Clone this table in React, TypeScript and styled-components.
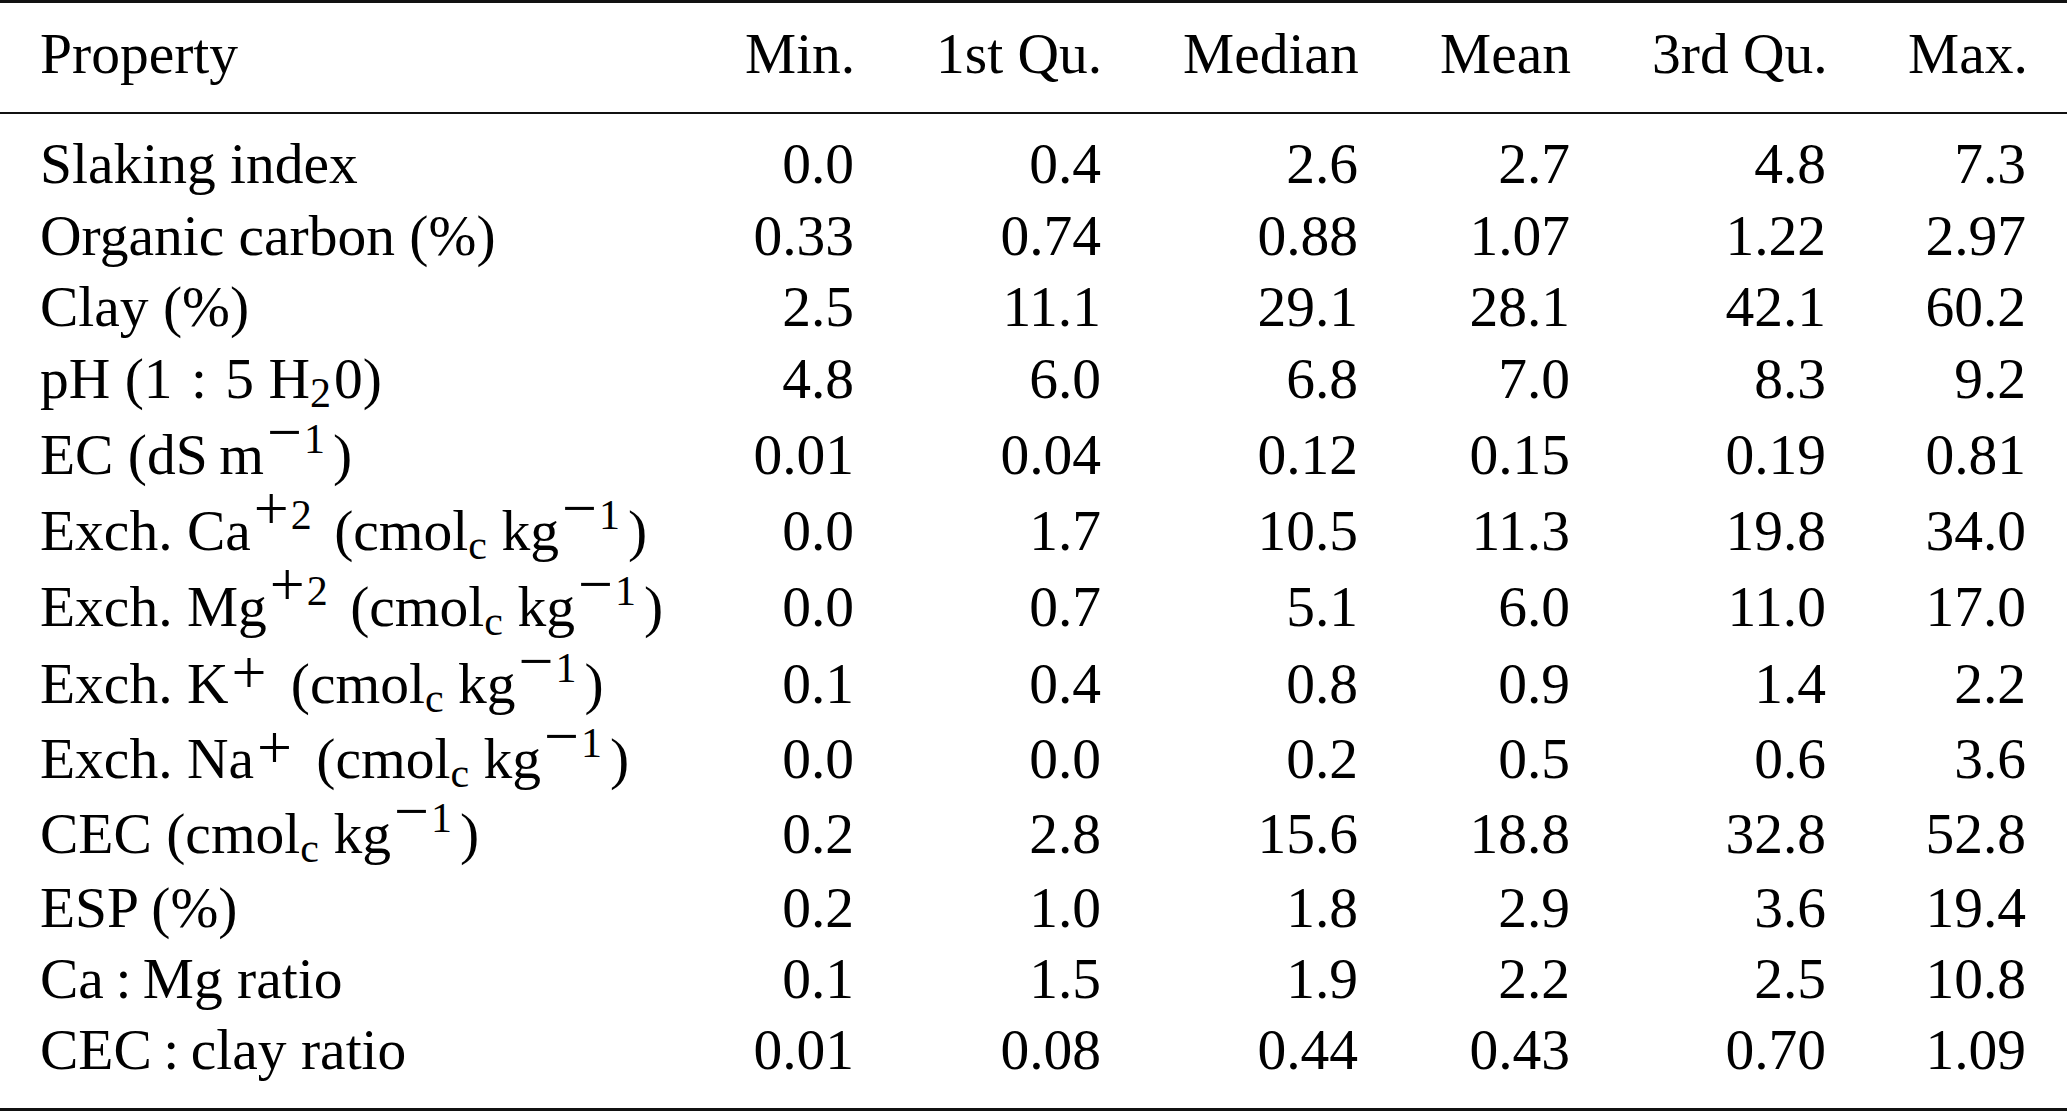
import React from 'react';
import styled, { createGlobalStyle } from 'styled-components';

const GlobalStyle = createGlobalStyle`
  html, body {
    margin: 0;
    padding: 0;
    background: #fff;
  }
  body {
    font-family: "Liberation Serif", "Times New Roman", serif;
    color: #000;
  }
`;

// column boxes, measured from the right edges of each column
const COLUMNS = '704px 191px 247px 257px 212px 256px 1fr';

const Table = styled.div`
  width: 2067px;
  border-top: 3px solid #111;
  border-bottom: 3px solid #111;
  font-size: 57.5px;
  line-height: 71px;
`;

const HeaderRow = styled.div`
  display: grid;
  grid-template-columns: ${COLUMNS};
  padding: 15px 0 23px;
  border-bottom: 2px solid #111;
`;

const Body = styled.div`
  padding: 14px 0 23px;
`;

const Row = styled.div<{ $gap: number }>`
  display: grid;
  grid-template-columns: ${COLUMNS};
  padding-top: ${(p) => p.$gap}px;
`;

const Cell = styled.div<{ $label?: boolean }>`
  padding: 0 41px 0 ${(p) => (p.$label ? 40 : 41)}px;
  text-align: ${(p) => (p.$label ? 'left' : 'right')};
  white-space: nowrap;
`;

const Sup = styled.sup<{ $raise?: number }>`
  font-size: 42px;
  line-height: 0;
  vertical-align: ${(p) => p.$raise ?? 21}px;
  margin: 0 8px 0 3px;
`;

const Sign = styled.span`
  font-size: 62px;
  margin-right: 2px;
`;

const Sub = styled.sub`
  font-size: 42px;
  line-height: 0;
  vertical-align: -9px;
  margin-right: 3px;
`;

const Rel = styled.span`
  margin: 0 4px;
`;

const THIN = '\u2009';
const MINUS = '\u2212';

const perKg = (
  <>
    cmol<Sub>c</Sub>
    {THIN}kg
    <Sup>
      <Sign>{MINUS}</Sign>1
    </Sup>
  </>
);

const cation = (name: string, charge?: string) => (
  <>
    Exch. {name}
    <Sup $raise={charge ? 21 : 10}>
      <Sign>+</Sign>
      {charge}
    </Sup>{' '}
    ({perKg})
  </>
);

type Stat = {
  label: React.ReactNode;
  gap: number;
  values: string[];
};

const headers = ['Min.', '1st Qu.', 'Median', 'Mean', '3rd Qu.', 'Max.'];

const rows: Stat[] = [
  { label: 'Slaking index', gap: 0, values: ['0.0', '0.4', '2.6', '2.7', '4.8', '7.3'] },
  { label: 'Organic carbon (%)', gap: 1, values: ['0.33', '0.74', '0.88', '1.07', '1.22', '2.97'] },
  { label: 'Clay (%)', gap: 0, values: ['2.5', '11.1', '29.1', '28.1', '42.1', '60.2'] },
  {
    label: (
      <>
        pH (1 <Rel>:</Rel> 5 H<Sub>2</Sub>0)
      </>
    ),
    gap: 1,
    values: ['4.8', '6.0', '6.8', '7.0', '8.3', '9.2'],
  },
  {
    label: (
      <>
        EC (dS{THIN}m
        <Sup>
          <Sign>{MINUS}</Sign>1
        </Sup>
        )
      </>
    ),
    gap: 5,
    values: ['0.01', '0.04', '0.12', '0.15', '0.19', '0.81'],
  },
  { label: cation('Ca', '2'), gap: 5, values: ['0.0', '1.7', '10.5', '11.3', '19.8', '34.0'] },
  { label: cation('Mg', '2'), gap: 5, values: ['0.0', '0.7', '5.1', '6.0', '11.0', '17.0'] },
  { label: cation('K'), gap: 6, values: ['0.1', '0.4', '0.8', '0.9', '1.4', '2.2'] },
  { label: cation('Na'), gap: 4, values: ['0.0', '0.0', '0.2', '0.5', '0.6', '3.6'] },
  { label: <>CEC ({perKg})</>, gap: 4, values: ['0.2', '2.8', '15.6', '18.8', '32.8', '52.8'] },
  { label: 'ESP (%)', gap: 3, values: ['0.2', '1.0', '1.8', '2.9', '3.6', '19.4'] },
  { label: `Ca${THIN}:${THIN}Mg ratio`, gap: 0, values: ['0.1', '1.5', '1.9', '2.2', '2.5', '10.8'] },
  { label: `CEC${THIN}:${THIN}clay ratio`, gap: 0, values: ['0.01', '0.08', '0.44', '0.43', '0.70', '1.09'] },
];

const App = () => (
  <>
    <GlobalStyle />
    <Table>
      <HeaderRow>
        <Cell $label>Property</Cell>
        {headers.map((h) => (
          <Cell key={h}>{h}</Cell>
        ))}
      </HeaderRow>
      <Body>
        {rows.map((row, i) => (
          <Row key={i} $gap={row.gap}>
            <Cell $label>{row.label}</Cell>
            {row.values.map((v, j) => (
              <Cell key={j}>{v}</Cell>
            ))}
          </Row>
        ))}
      </Body>
    </Table>
  </>
);

export default App;
